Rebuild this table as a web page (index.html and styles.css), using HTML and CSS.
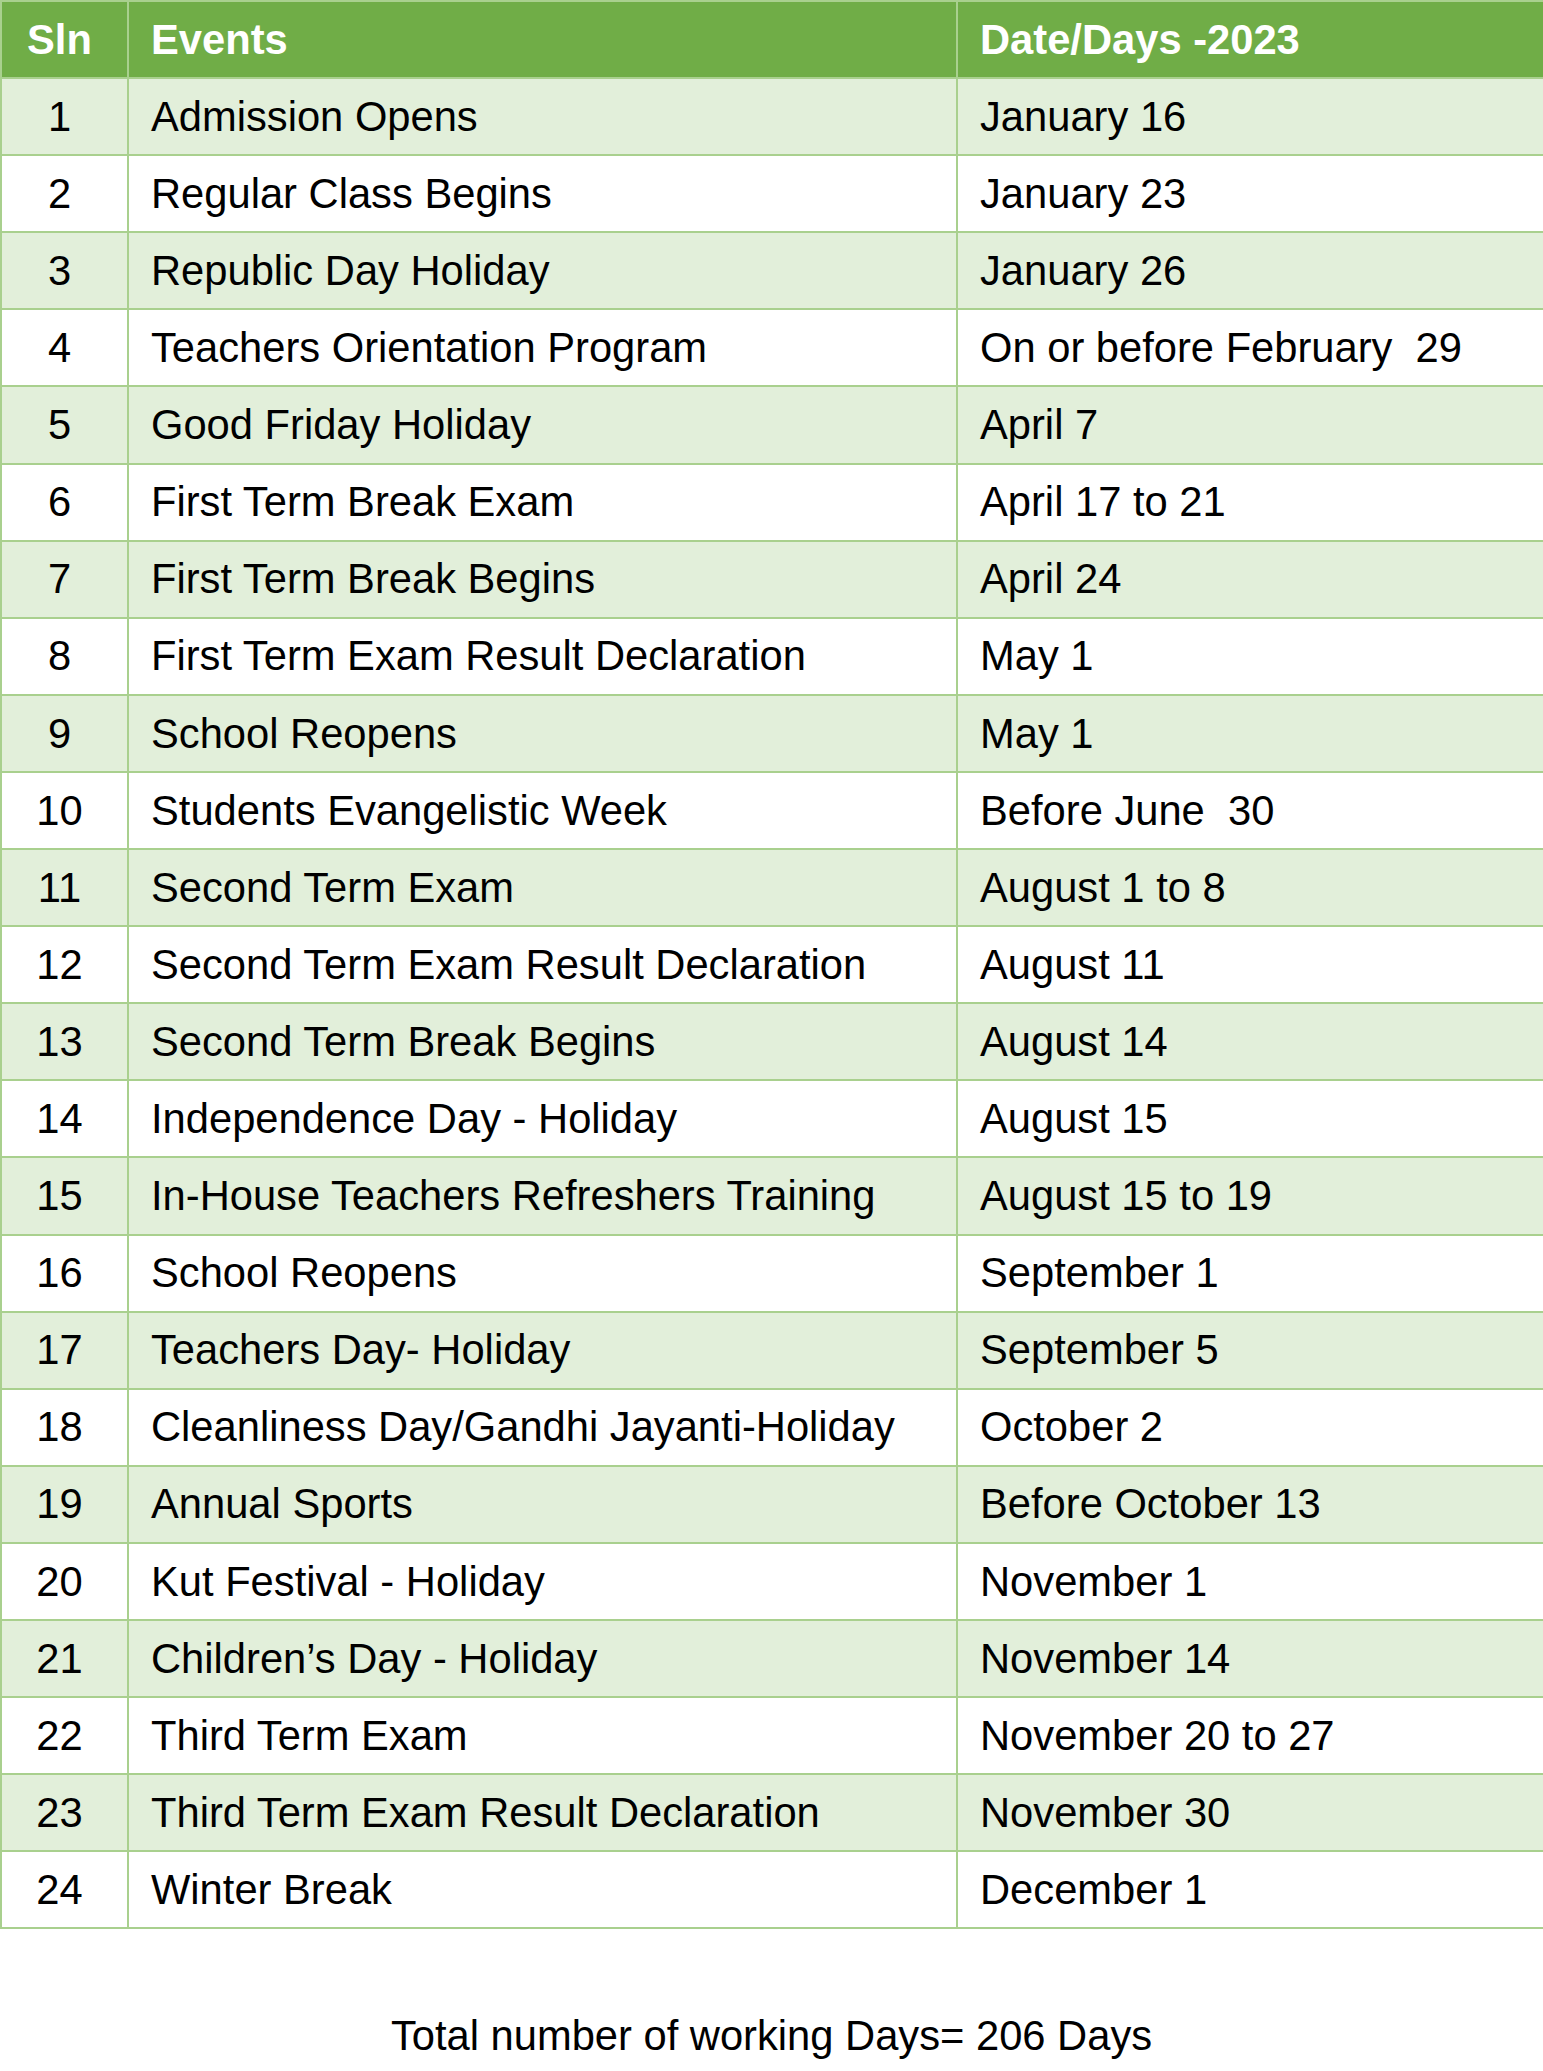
FILE: index.html
```html
<!DOCTYPE html>
<html lang="en">
<head>
<meta charset="utf-8">
<title>Academic Calendar 2023</title>
<link rel="stylesheet" href="styles.css">
</head>
<body>
<table class="calendar">
  <colgroup>
    <col class="col-sln">
    <col class="col-event">
    <col class="col-date">
  </colgroup>
  <thead>
    <tr>
      <th class="sln">Sln</th>
      <th>Events</th>
      <th>Date/Days -2023</th>
    </tr>
  </thead>
  <tbody>
    <tr><td class="sln">1</td><td>Admission Opens</td><td>January 16</td></tr>
    <tr><td class="sln">2</td><td>Regular Class Begins</td><td>January 23</td></tr>
    <tr><td class="sln">3</td><td>Republic Day Holiday</td><td>January 26</td></tr>
    <tr><td class="sln">4</td><td>Teachers Orientation Program</td><td>On or before February&nbsp; 29</td></tr>
    <tr><td class="sln">5</td><td>Good Friday Holiday</td><td>April 7</td></tr>
    <tr><td class="sln">6</td><td>First Term Break Exam</td><td>April 17 to 21</td></tr>
    <tr><td class="sln">7</td><td>First Term Break Begins</td><td>April 24</td></tr>
    <tr><td class="sln">8</td><td>First Term Exam Result Declaration</td><td>May 1</td></tr>
    <tr><td class="sln">9</td><td>School Reopens</td><td>May 1</td></tr>
    <tr><td class="sln">10</td><td>Students Evangelistic Week</td><td>Before June&nbsp; 30</td></tr>
    <tr><td class="sln">11</td><td>Second Term Exam</td><td>August 1 to 8</td></tr>
    <tr><td class="sln">12</td><td>Second Term Exam Result Declaration</td><td>August 11</td></tr>
    <tr><td class="sln">13</td><td>Second Term Break Begins</td><td>August 14</td></tr>
    <tr><td class="sln">14</td><td>Independence Day - Holiday</td><td>August 15</td></tr>
    <tr><td class="sln">15</td><td>In-House Teachers Refreshers Training</td><td>August 15 to 19</td></tr>
    <tr><td class="sln">16</td><td>School Reopens</td><td>September 1</td></tr>
    <tr><td class="sln">17</td><td>Teachers Day- Holiday</td><td>September 5</td></tr>
    <tr><td class="sln">18</td><td>Cleanliness Day/Gandhi Jayanti-Holiday</td><td>October 2</td></tr>
    <tr><td class="sln">19</td><td>Annual Sports</td><td>Before October 13</td></tr>
    <tr><td class="sln">20</td><td>Kut Festival - Holiday</td><td>November 1</td></tr>
    <tr><td class="sln">21</td><td>Children’s Day - Holiday</td><td>November 14</td></tr>
    <tr><td class="sln">22</td><td>Third Term Exam</td><td>November 20 to 27</td></tr>
    <tr><td class="sln">23</td><td>Third Term Exam Result Declaration</td><td>November 30</td></tr>
    <tr><td class="sln">24</td><td>Winter Break</td><td>December 1</td></tr>
  </tbody>
</table>
<p class="total">Total number of working Days= 206 Days</p>
</body>
</html>
```

FILE: styles.css
```css
html, body {
  margin: 0;
  padding: 0;
  background: #ffffff;
}

body {
  font-family: "Liberation Sans", Arial, sans-serif;
  font-size: 41.7px;
  color: #000000;
}

.calendar {
  width: 1543px;
  border-collapse: collapse;
  table-layout: fixed;
}

.col-sln { width: 127px; }
.col-event { width: 829px; }
.col-date { width: 587px; }

.calendar th,
.calendar td {
  border: 2px solid #a9d08e;
  height: 75.1px;
  padding: 0 0 0 22px;
  text-align: left;
  vertical-align: middle;
  white-space: nowrap;
  line-height: 1;
}

.calendar th {
  background: #70ad47;
  color: #ffffff;
  font-weight: bold;
}

.calendar .sln {
  text-align: center;
  padding: 0 10px 0 0;
}

.calendar tbody tr:nth-child(odd) {
  background: #e2efda;
}

.calendar tbody tr:nth-child(even) {
  background: #ffffff;
}

.total {
  margin: 83px 0 0 0;
  text-align: center;
}
```
